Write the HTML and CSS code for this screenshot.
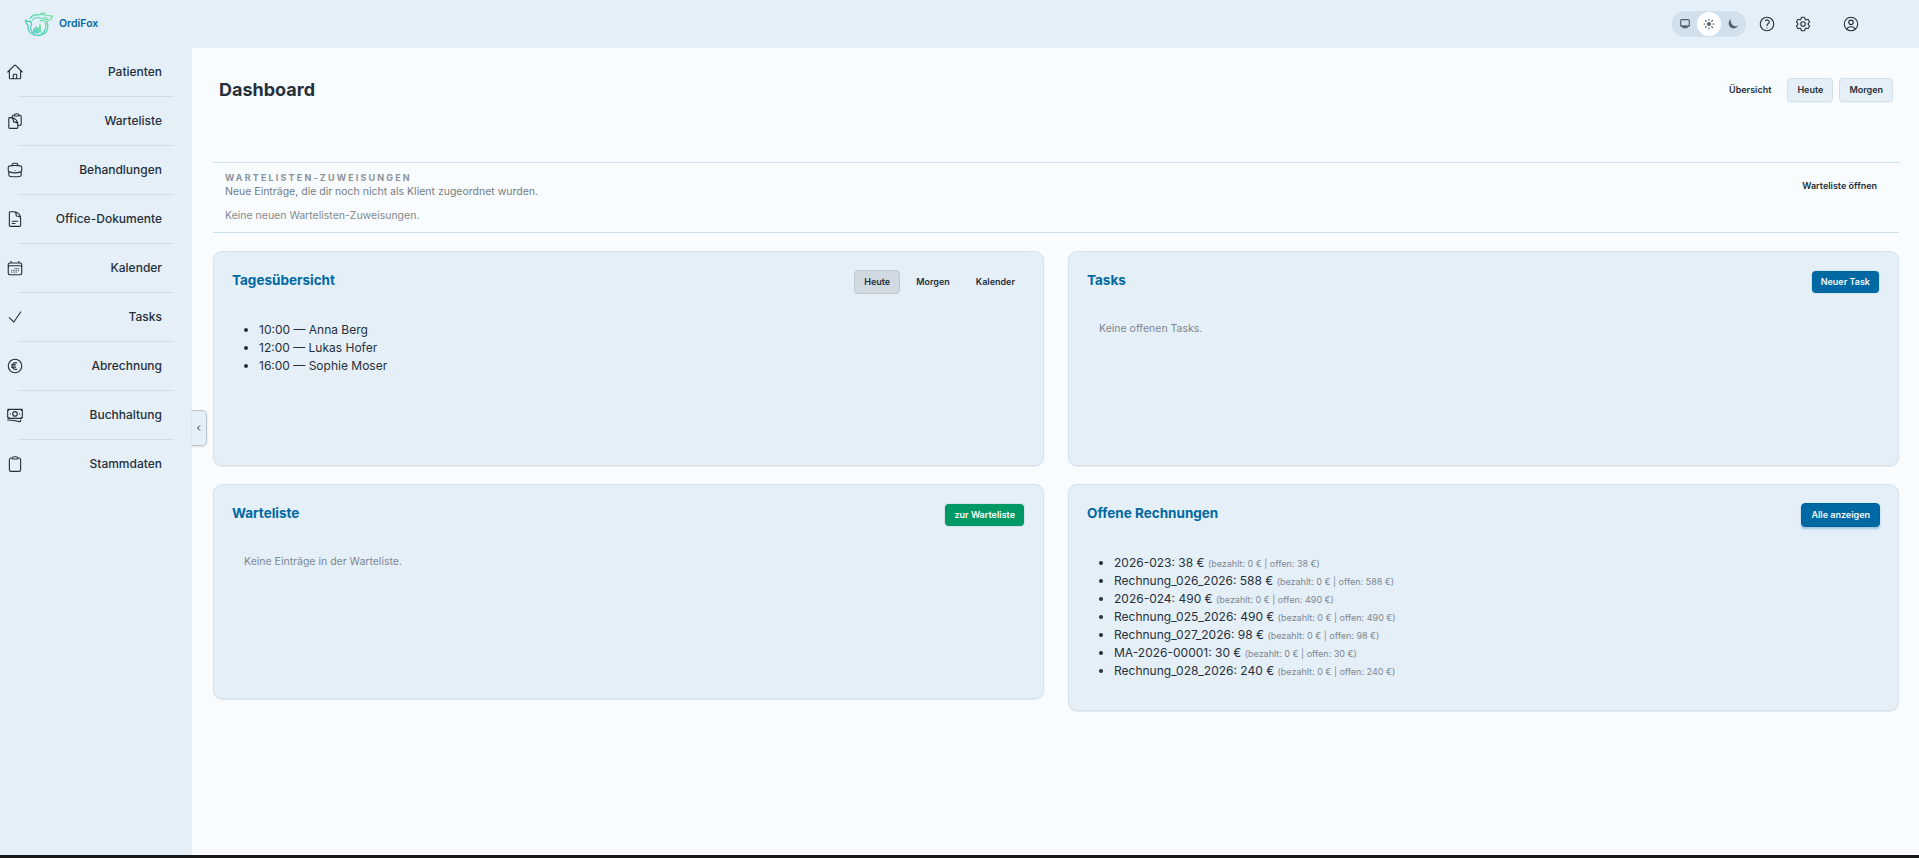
FILE: index.html
```html
<!DOCTYPE html>
<html lang="de">
<head>
    <meta charset="UTF-8">
    <meta name="viewport" content="width=device-width, initial-scale=1.0">
    <title>OrdiFox</title>
    <link rel="stylesheet" href="styles.css">
</head>
<body>
<header class="topbar">
    <a class="brand">
        <svg class="logo" viewBox="0 0 28 24">
            <defs>
                <linearGradient id="fox" x1="0" y1="1" x2="1" y2="0">
                    <stop offset="0" stop-color="#2cc5bd"/>
                    <stop offset="1" stop-color="#5fe08f"/>
                </linearGradient>
            </defs>
            <g fill="none" stroke="url(#fox)" stroke-width="1.1" stroke-linejoin="round" stroke-linecap="round">
                <path d="M5 6.500C8 2.500 11 2 15 3L16.500 1L17.500 3L19 .7L20.500 3.500L27.500 4C27 7 24.500 8.500 21.500 9C24 13 23 19 19.500 21.500C15 24.500 7 24 4 19C3 17 2.600 15 3 13C1 12 .5 10 .6 8C2 9.500 3.500 10 5 9C6 10 7 11 6.500 13C5 16 6 19.500 9 21.500"/>
                <path d="M7.500 8C9 5.500 12 5 15 6M16 6.500L21 5.500M15 8.500C18 9 20 8 23 6.500M20 9.500C22 14 21 18 17 21.500"/>
                <path d="M9 20V17M11 21V15M13 21V16M15 20V13" stroke-width="1.500"/>
            </g>
        </svg>
        <span>OrdiFox</span>
    </a>
    <div class="top-actions">
        <div class="theme-toggle">
            <span class="theme"><svg viewBox="0 0 12 12"><rect x="1.700" y="1.700" width="8.600" height="6.600" rx="1" fill="none" stroke="currentColor" stroke-width="1.200"/><path d="M1.500 7.500h9v.8h-9zM3.500 8.500h5v1.800h-5z" fill="currentColor"/></svg></span>
            <span class="theme active"><svg viewBox="0 0 12 12"><circle cx="6" cy="6" r="2" fill="currentColor"/><path d="M6 1v1.200M6 9.800V11M1 6h1.200M9.800 6H11M2.500 2.500l.8.8M8.700 8.700l.8.8M2.500 9.500l.8-.8M8.700 3.300l.8-.8" stroke="currentColor" stroke-width="1.100" stroke-linecap="round"/></svg></span>
            <span class="theme"><svg viewBox="0 0 12 12"><path d="M4.200 1A5 5 0 1 0 11 7.800 5.200 5.200 0 0 1 4.200 1Z" fill="currentColor"/></svg></span>
        </div>
        <svg class="icon help" viewBox="0 0 24 24"><path d="M9.879 7.519c1.171-1.025 3.071-1.025 4.242 0 1.172 1.025 1.172 2.687 0 3.712-.203.179-.43.326-.67.442-.745.361-1.450.999-1.450 1.827v.75M21 12a9 9 0 1 1-18 0 9 9 0 0 1 18 0Zm-9 5.250h.008v.008H12v-.008Z"/></svg>
        <svg class="icon gear" viewBox="0 0 24 24"><path d="M9.594 3.940c.09-.542.56-.94 1.110-.94h2.593c.55 0 1.020.398 1.110.94l.213 1.281c.063.374.313.686.645.87.074.04.147.083.22.127.325.196.72.257 1.075.124l1.217-.456a1.125 1.125 0 0 1 1.370.49l1.296 2.247a1.125 1.125 0 0 1-.26 1.431l-1.003.827c-.293.241-.438.613-.43.992a7.723 7.723 0 0 1 0 .255c-.008.378.137.75.43.991l1.004.827c.424.35.534.955.26 1.430l-1.298 2.247a1.125 1.125 0 0 1-1.369.491l-1.217-.456c-.355-.133-.75-.072-1.076.124a6.470 6.470 0 0 1-.22.128c-.331.183-.581.495-.644.869l-.213 1.281c-.09.543-.56.94-1.110.94h-2.594c-.55 0-1.019-.398-1.110-.94l-.213-1.281c-.062-.374-.312-.686-.644-.87a6.520 6.520 0 0 1-.22-.127c-.325-.196-.72-.257-1.076-.124l-1.217.456a1.125 1.125 0 0 1-1.369-.49l-1.297-2.247a1.125 1.125 0 0 1 .26-1.431l1.004-.827c.292-.24.437-.613.43-.991a6.932 6.932 0 0 1 0-.255c.007-.38-.138-.751-.43-.992l-1.004-.827a1.125 1.125 0 0 1-.26-1.430l1.297-2.247a1.125 1.125 0 0 1 1.370-.491l1.216.456c.356.133.751.072 1.076-.124.072-.044.146-.086.22-.128.332-.183.582-.495.644-.869l.214-1.280Z"/><path d="M15 12a3 3 0 1 1-6 0 3 3 0 0 1 6 0Z"/></svg>
        <svg class="icon user" viewBox="0 0 24 24"><path d="M17.982 18.725A7.488 7.488 0 0 0 12 15.750a7.488 7.488 0 0 0-5.982 2.975m11.963 0a9 9 0 1 0-11.963 0m11.963 0A8.966 8.966 0 0 1 12 21a8.966 8.966 0 0 1-5.982-2.275M15 9.750a3 3 0 1 1-6 0 3 3 0 0 1 6 0Z"/></svg>
    </div>
</header>

<div class="layout">
    <nav class="sidebar">
        <a class="nav-item">
            <svg class="icon" viewBox="0 0 24 24"><path d="m2.250 12 8.954-8.955c.44-.439 1.152-.439 1.591 0L21.750 12M4.500 9.750v10.125c0 .621.504 1.125 1.125 1.125H9.750v-4.875c0-.621.504-1.125 1.125-1.125h2.250c.621 0 1.125.504 1.125 1.125V21h4.125c.621 0 1.125-.504 1.125-1.125V9.750M8.250 21h8.250"/></svg>
            <span>Patienten</span>
        </a>
        <a class="nav-item">
            <svg class="icon" viewBox="0 0 24 24"><path d="M8.250 7.500V6.108c0-1.135.845-2.098 1.976-2.192.373-.03.748-.057 1.123-.08M15.750 18H18a2.250 2.250 0 0 0 2.250-2.250V6.108c0-1.135-.845-2.098-1.976-2.192a48.424 48.424 0 0 0-1.123-.08M15.750 18.750v-1.875a3.375 3.375 0 0 0-3.375-3.375h-1.500a1.125 1.125 0 0 1-1.125-1.125v-1.500A3.375 3.375 0 0 0 6.375 7.500H5.250m11.900-3.664A2.251 2.251 0 0 0 15 2.250h-1.500a2.251 2.251 0 0 0-2.150 1.586m5.800 0c.065.21.1.433.1.664v.75h-6V4.500c0-.231.035-.454.1-.664M6.750 7.500H4.875c-.621 0-1.125.504-1.125 1.125v12c0 .621.504 1.125 1.125 1.125h9.750c.621 0 1.125-.504 1.125-1.125V16.500a9 9 0 0 0-9-9Z"/></svg>
            <span>Warteliste</span>
        </a>
        <a class="nav-item">
            <svg class="icon" viewBox="0 0 24 24"><path d="M20.250 14.150v4.250c0 1.094-.787 2.036-1.872 2.180-2.087.277-4.216.42-6.378.42s-4.291-.143-6.378-.42c-1.085-.144-1.872-1.086-1.872-2.180v-4.250m16.500 0a2.180 2.180 0 0 0 .75-1.661V8.706c0-1.081-.768-2.015-1.837-2.175a48.114 48.114 0 0 0-3.413-.387m4.500 8.006c-.194.165-.42.295-.673.38A23.978 23.978 0 0 1 12 15.750c-2.648 0-5.195-.429-7.577-1.220a2.016 2.016 0 0 1-.673-.38m0 0A2.180 2.180 0 0 1 3 12.489V8.706c0-1.081.768-2.015 1.837-2.175a48.111 48.111 0 0 1 3.413-.387m7.500 0V5.250A2.250 2.250 0 0 0 13.500 3h-3a2.250 2.250 0 0 0-2.250 2.250v.894m7.500 0a48.667 48.667 0 0 0-7.500 0M12 12.750h.008v.008H12v-.008Z"/></svg>
            <span>Behandlungen</span>
        </a>
        <a class="nav-item">
            <svg class="icon" viewBox="0 0 24 24"><path d="M19.500 14.250v-2.625a3.375 3.375 0 0 0-3.375-3.375h-1.500A1.125 1.125 0 0 1 13.500 7.125v-1.500a3.375 3.375 0 0 0-3.375-3.375H8.250m0 12.750h7.500m-7.500 3H12M10.500 2.250H5.625c-.621 0-1.125.504-1.125 1.125v17.250c0 .621.504 1.125 1.125 1.125h12.750c.621 0 1.125-.504 1.125-1.125V11.250a9 9 0 0 0-9-9Z"/></svg>
            <span>Office-Dokumente</span>
        </a>
        <a class="nav-item">
            <svg class="icon" viewBox="0 0 24 24"><path d="M6.750 3v2.250M17.250 3v2.250M3 18.750V7.500a2.250 2.250 0 0 1 2.250-2.250h13.500A2.250 2.250 0 0 1 21 7.500v11.250m-18 0A2.250 2.250 0 0 0 5.250 21h13.500A2.250 2.250 0 0 0 21 18.750m-18 0v-7.500A2.250 2.250 0 0 1 5.250 9h13.500A2.250 2.250 0 0 1 21 11.250v7.500M12 12.750h.01M12 15h.01M12 17.250h.01M9.750 15h.01M9.750 17.250h.01M7.500 15h.01M7.500 17.250h.01M14.250 12.750h.01M14.250 15h.01M14.250 17.250h.01M16.500 12.750h.01M16.500 15h.01"/></svg>
            <span>Kalender</span>
        </a>
        <a class="nav-item">
            <svg class="icon" viewBox="0 0 24 24"><path d="m4.500 12.750 6 6 9-13.500"/></svg>
            <span>Tasks</span>
        </a>
        <a class="nav-item">
            <svg class="icon" viewBox="0 0 24 24"><path d="M14.250 7.756a4.500 4.500 0 1 0 0 8.488M7.500 10.500h5.250m-5.250 3h5.250M21 12a9 9 0 1 1-18 0 9 9 0 0 1 18 0Z"/></svg>
            <span>Abrechnung</span>
        </a>
        <a class="nav-item">
            <svg class="icon" viewBox="0 0 24 24"><path d="M2.250 18.750a60.070 60.070 0 0 1 15.797 2.101c.727.198 1.453-.342 1.453-1.096V18.750M3.750 4.500v.75A.75.75 0 0 1 3 6h-.75m0 0v-.375c0-.621.504-1.125 1.125-1.125H20.250M2.250 6v9m18-10.500v.75c0 .414.336.75.75.75h.75m-1.500-1.500h.375c.621 0 1.125.504 1.125 1.125v9.750c0 .621-.504 1.125-1.125 1.125h-.375m1.500-1.500H21a.75.75 0 0 0-.75.75v.75m0 0H3.750m0 0h-.375a1.125 1.125 0 0 1-1.125-1.125V15m1.500 1.500v-.75A.75.75 0 0 0 3 15h-.75M15 10.500a3 3 0 1 1-6 0 3 3 0 0 1 6 0Zm3 0h.008v.008H18V10.500Zm-12 0h.008v.008H6V10.500Z"/></svg>
            <span>Buchhaltung</span>
        </a>
        <a class="nav-item">
            <svg class="icon" viewBox="0 0 24 24"><path d="M15.666 3.888A2.250 2.250 0 0 0 13.500 2.250h-3c-1.030 0-1.900.693-2.166 1.638m7.332 0c.055.194.084.4.084.612a.75.75 0 0 1-.75.75H9a.75.75 0 0 1-.75-.75c0-.212.03-.418.084-.612m7.332 0c.646.049 1.288.11 1.927.184 1.100.128 1.907 1.077 1.907 2.185V19.500a2.250 2.250 0 0 1-2.250 2.250H6.750A2.250 2.250 0 0 1 4.500 19.500V6.257c0-1.108.806-2.057 1.907-2.185a48.208 48.208 0 0 1 1.927-.184"/></svg>
            <span>Stammdaten</span>
        </a>
        <button class="collapse" aria-label="Menü einklappen"><svg viewBox="0 0 8 8"><path d="M5 1.500 2.500 4 5 6.500"/></svg></button>
    </nav>

    <main class="content">
        <div class="page-head">
            <h1>Dashboard</h1>
            <div class="buttons">
                <button class="btn ghost">Übersicht</button>
                <button class="btn">Heute</button>
                <button class="btn">Morgen</button>
            </div>
        </div>

        <section class="assignments">
            <div>
                <h2>Wartelisten-Zuweisungen</h2>
                <p>Neue Einträge, die dir noch nicht als Klient zugeordnet wurden.</p>
                <p class="none">Keine neuen Wartelisten-Zuweisungen.</p>
            </div>
            <button class="btn ghost">Warteliste öffnen</button>
        </section>

        <div class="cards">
            <section class="card">
                <div class="card-head">
                    <h3>Tagesübersicht</h3>
                    <div class="buttons">
                        <button class="btn pressed">Heute</button>
                        <button class="btn ghost">Morgen</button>
                        <button class="btn ghost">Kalender</button>
                    </div>
                </div>
                <ul>
                    <li>10:00 — Anna Berg</li>
                    <li>12:00 — Lukas Hofer</li>
                    <li>16:00 — Sophie Moser</li>
                </ul>
            </section>

            <section class="card">
                <div class="card-head">
                    <h3>Tasks</h3>
                    <button class="btn primary outlined">Neuer Task</button>
                </div>
                <p class="empty">Keine offenen Tasks.</p>
            </section>

            <section class="card">
                <div class="card-head">
                    <h3>Warteliste</h3>
                    <button class="btn success outlined">zur Warteliste</button>
                </div>
                <p class="empty">Keine Einträge in der Warteliste.</p>
            </section>

            <section class="card">
                <div class="card-head">
                    <h3>Offene Rechnungen</h3>
                    <button class="btn primary">Alle anzeigen</button>
                </div>
                <ul>
                    <li>2026-023: 38 € <small>(bezahlt: 0 € | offen: 38 €)</small></li>
                    <li>Rechnung_026_2026: 588 € <small>(bezahlt: 0 € | offen: 588 €)</small></li>
                    <li>2026-024: 490 € <small>(bezahlt: 0 € | offen: 490 €)</small></li>
                    <li>Rechnung_025_2026: 490 € <small>(bezahlt: 0 € | offen: 490 €)</small></li>
                    <li>Rechnung_027_2026: 98 € <small>(bezahlt: 0 € | offen: 98 €)</small></li>
                    <li>MA-2026-00001: 30 € <small>(bezahlt: 0 € | offen: 30 €)</small></li>
                    <li>Rechnung_028_2026: 240 € <small>(bezahlt: 0 € | offen: 240 €)</small></li>
                </ul>
            </section>
        </div>
    </main>
</div>
</body>
</html>
```

FILE: styles.css
```css
* {
    box-sizing: border-box;
}

body {
    margin: 0;
    height: 100vh;
    display: flex;
    flex-direction: column;
    font-family: Inter, sans-serif;
    font-size: 12px;
    line-height: 18px;
    color: #25303b;
    background: #f8fcff;
    border-bottom: 3px solid #19191c;
    overflow: hidden;
}

h1, h2, h3, p, ul {
    margin: 0;
}

.icon {
    width: 18px;
    height: 18px;
    fill: none;
    stroke: currentColor;
    stroke-width: 1.5;
    stroke-linecap: round;
    stroke-linejoin: round;
    flex: none;
}

.topbar {
    height: 48px;
    flex: none;
    display: flex;
    align-items: center;
    justify-content: space-between;
    padding: 0 59px 0 25px;
    background: #e5eff8;
}

.brand {
    display: flex;
    align-items: center;
    gap: 6px;
    font-size: 10.5px;
    font-weight: 600;
    color: #0069a4;
}

.logo {
    width: 28px;
    height: 24px;
}

.top-actions {
    display: flex;
    align-items: center;
}

.theme-toggle {
    display: flex;
    padding: 1px;
    border-radius: 13px;
    background: #d0e0ec;
}

.theme {
    width: 24px;
    height: 24px;
    border-radius: 50%;
    display: flex;
    align-items: center;
    justify-content: center;
    color: #52606c;
}

.theme svg {
    width: 12px;
    height: 12px;
}

.theme.active {
    background: #fff;
}

.help {
    margin-left: 12px;
}

.gear {
    margin-left: 18px;
}

.user {
    margin-left: 30px;
}

.layout {
    flex: 1;
    display: flex;
}

.sidebar {
    position: relative;
    width: 192px;
    flex: none;
    background: #e5eff8;
}

.nav-item {
    display: flex;
    align-items: center;
    justify-content: space-between;
    height: 49px;
    padding: 0 30px 1px 6px;
    font-size: 12px;
    font-weight: 500;
    background: linear-gradient(#d0dce6, #d0dce6) 18px 100% / 156px 1px no-repeat;
}

.nav-item:nth-last-child(2) {
    background: none;
}

/* tab hanging off the right edge of the sidebar */
.collapse {
    position: absolute;
    left: 192px;
    top: 362px;
    width: 15px;
    height: 36px;
    padding: 0;
    display: flex;
    align-items: center;
    justify-content: center;
    border: 1px solid #b9c6d1;
    border-left: 0;
    border-radius: 0 5px 5px 0;
    background: #e5eff8;
    box-shadow: 0 1px 2px rgba(0, 0, 0, 0.12);
    color: #25303b;
}

.collapse svg {
    width: 8px;
    height: 8px;
    margin-right: 1px;
    fill: none;
    stroke: currentColor;
    stroke-width: 1;
}

.content {
    flex: 1;
    padding: 24px 20px 0 21px;
}

.page-head {
    display: flex;
    align-items: center;
    justify-content: space-between;
    height: 36px;
    padding: 0 6px;
}

h1 {
    font-size: 18px;
    font-weight: 700;
    line-height: 24px;
}

.buttons {
    display: flex;
    gap: 6px;
}

.btn {
    height: 24px;
    padding: 0 9px 1px;
    border: 1px solid #d2dee9;
    border-radius: 4px;
    font-family: inherit;
    font-size: 9px;
    font-weight: 600;
    color: #25303b;
    background: #e5eff8;
    box-shadow: 0 1px 1px rgba(0, 0, 0, 0.04);
}

.btn.ghost {
    border-color: transparent;
    background: none;
    box-shadow: none;
}

.btn.pressed {
    background: #d1d9e1;
    border-color: #bfc9d2;
    box-shadow: none;
}

.btn.primary {
    background: #0069a4;
    border-color: #00629b;
    color: #f2f8fc;
    box-shadow: 0 2px 2px rgba(0, 105, 164, 0.3);
}

.btn.success {
    background: #009966;
    color: #fff;
}

.btn.outlined {
    border-color: #d5e1eb;
    box-shadow: none;
    background-clip: padding-box;
}

.assignments {
    display: flex;
    justify-content: space-between;
    align-items: flex-start;
    height: 71px;
    margin-top: 54px;
    padding: 9px 12px 0;
    border-top: 1px solid #cbdeeb;
    border-bottom: 1px solid #cbdeeb;
}

.assignments .btn {
    margin-top: 2px;
}

.assignments h2 {
    font-size: 9px;
    line-height: 12px;
    font-weight: 700;
    letter-spacing: 2.16px;
    text-transform: uppercase;
    color: #8d9499;
}

.assignments p {
    font-size: 10.5px;
    line-height: 15px;
    color: #757d84;
}

.assignments .none {
    margin-top: 9px;
    color: #83898e;
}

.cards {
    display: grid;
    grid-template-columns: 1fr 1fr;
    gap: 18px 24px;
    align-items: start;
    margin-top: 18px;
}

.card {
    min-height: 215px;
    padding: 18px 18px 30px;
    border: 1px solid #d8e2eb;
    border-radius: 9px;
    background: #e5eff8;
    box-shadow: 0 1px 1px rgba(0, 0, 0, 0.08);
}

.card-head {
    display: flex;
    justify-content: space-between;
    align-items: flex-start;
    height: 42px;
}

h3 {
    font-size: 13.5px;
    line-height: 21px;
    font-weight: 700;
    color: #0069a4;
}

ul {
    margin-top: 9px;
    padding-left: 27px;
}

li {
    height: 18px;
}

li small {
    font-size: 9px;
    line-height: 1;
    color: #7d8790;
}

.empty {
    padding: 8px 12px;
    font-size: 10.5px;
    color: #7d8790;
}
```
